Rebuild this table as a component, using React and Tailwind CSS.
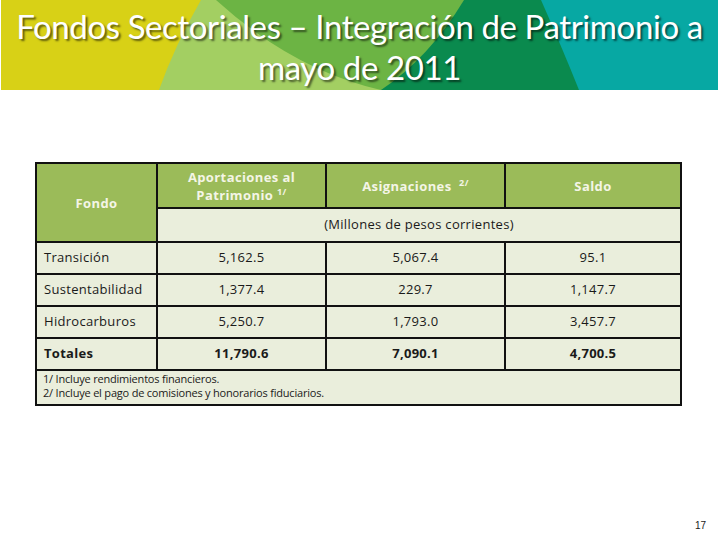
const rows = [
  { fondo: 'Transición', aport: '5,162.5', asig: '5,067.4', saldo: '95.1' },
  { fondo: 'Sustentabilidad', aport: '1,377.4', asig: '229.7', saldo: '1,147.7' },
  { fondo: 'Hidrocarburos', aport: '5,250.7', asig: '1,793.0', saldo: '3,457.7' },
];

function Banner() {
  return (
    <div className="grid w-[717px] h-[90px] ml-[1px]">
      <svg className="col-start-1 row-start-1 w-full h-full" viewBox="0 0 717 90" preserveAspectRatio="none">
        <rect width="717" height="90" fill="#07a8a3" />
        <path d="M0 0 H540 Q562 50 578 90 H0 Z" fill="#0a8a4e" />
        <path d="M0 0 H463 Q428 58 380 90 H0 Z" fill="#6cb444" />
        <path d="M0 0 H215 Q292 70 380 90 H0 Z" fill="#a3cf62" />
        <path d="M0 0 H200 Q174 45 158 90 H0 Z" fill="#d8d116" />
      </svg>
      <h1 className="col-start-1 row-start-1 z-10 pt-[6px] text-center text-white text-[33px] leading-[41px] tracking-[-0.4px] font-['Lato','Open_Sans',sans-serif] [text-shadow:2px_2px_2px_rgba(0,0,0,0.55)]">
        Fondos Sectoriales – Integración de Patrimonio a
        <br />
        mayo de 2011
      </h1>
    </div>
  );
}

export default function App() {
  const cell = 'border-2 border-[#111] h-[32px] text-[13px] tracking-[0.3px]';
  const head = 'border-2 border-[#111] bg-[#9bbb59] text-[#f4f5e6] font-bold text-[13px] leading-[18px] tracking-[0.4px]';

  return (
    <div className="w-[720px] h-[540px] bg-white font-['Open_Sans','Liberation_Sans',sans-serif] text-[#1a1a1a] flex flex-col">
      <Banner />

      <div className="pl-[35px] pt-[72px]">
        <table className="w-[645px] border-collapse border-2 border-[#111] bg-[#eaeedc] table-fixed">
          <colgroup>
            <col className="w-[121px]" />
            <col className="w-[169px]" />
            <col className="w-[179px]" />
            <col className="w-[176px]" />
          </colgroup>
          <thead>
            <tr className="h-[45px]">
              <th rowSpan={2} className={head}>Fondo</th>
              <th className={head}>
                Aportaciones al
                <br />
                Patrimonio <sup className="text-[9px]">1/</sup>
              </th>
              <th className={head}>
                Asignaciones&nbsp; <sup className="text-[9px]">2/</sup>
              </th>
              <th className={head}>Saldo</th>
            </tr>
            <tr className="h-[34px]">
              <td colSpan={3} className="border-2 border-[#111] text-center text-[13px] tracking-[0.3px]">
                (Millones de pesos corrientes)
              </td>
            </tr>
          </thead>
          <tbody>
            {rows.map((r) => (
              <tr key={r.fondo}>
                <td className={cell + ' pl-[7px] text-left'}>{r.fondo}</td>
                <td className={cell + ' text-center'}>{r.aport}</td>
                <td className={cell + ' text-center'}>{r.asig}</td>
                <td className={cell + ' text-center'}>{r.saldo}</td>
              </tr>
            ))}
            <tr className="font-bold">
              <td className={cell + ' pl-[7px] text-left'}>Totales</td>
              <td className={cell + ' text-center'}>11,790.6</td>
              <td className={cell + ' text-center'}>7,090.1</td>
              <td className={cell + ' text-center'}>4,700.5</td>
            </tr>
            <tr>
              <td colSpan={4} className="border-2 border-[#111] h-[35px] pl-[6px] text-[11px] leading-[14px] tracking-[-0.2px] align-top pt-[1px]">
                <p>1/ Incluye rendimientos financieros.</p>
                <p>2/ Incluye el pago de comisiones y honorarios fiduciarios.</p>
              </td>
            </tr>
          </tbody>
        </table>
      </div>

      <div className="mt-auto mb-[7px] pr-[14px] text-right text-[10px] font-['Liberation_Sans',sans-serif]">17</div>
    </div>
  );
}
